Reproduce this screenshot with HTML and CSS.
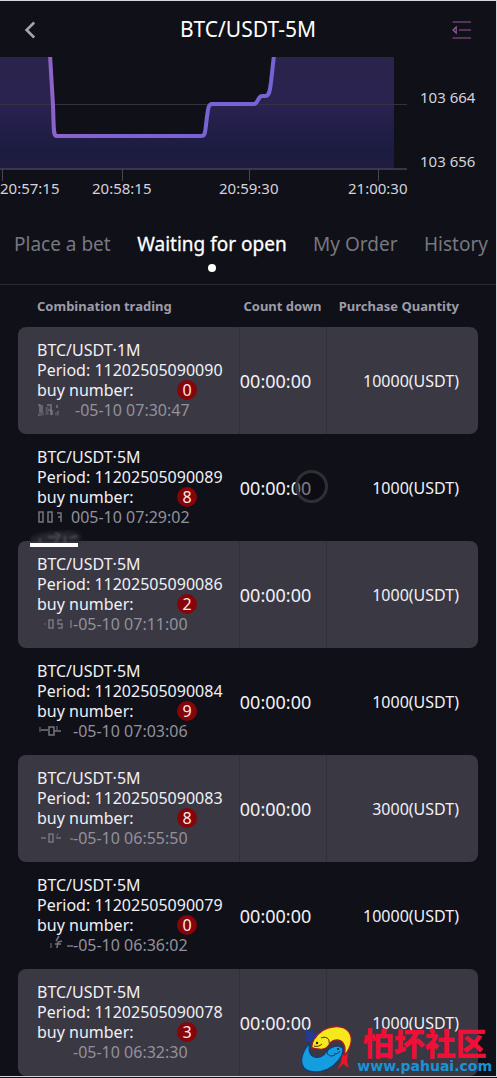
FILE: index.html
```html
<!DOCTYPE html>
<html lang="en">
<head>
<meta charset="utf-8">
<meta name="viewport" content="width=device-width, initial-scale=1">
<title>BTC/USDT-5M</title>
<link rel="stylesheet" href="styles.css">
</head>
<body>
<div class="app">
  <header class="topbar">
    <button class="icon-btn" type="button" aria-label="Back">
      <svg width="12" height="18" viewBox="0 0 12 18" fill="none" stroke="#a3a4b3" stroke-width="2.6"><path d="M10.2 1.500 2.600 9l7.600 7.500"/></svg>
    </button>
    <h1 class="title">BTC/USDT-5M</h1>
    <button class="icon-btn icon-btn-end" type="button" aria-label="Menu">
      <svg width="20" height="18" viewBox="0 0 20 18" fill="none" stroke="#94599a" stroke-width="1.2"><path d="M.5 1h18.500M7 9h12M.5 17h18.500M4.200 6 1 9l3.200 3z"/></svg>
    </button>
  </header>

  <section class="chart">
    <div class="plot">
      <svg class="plot-svg" viewBox="0 0 407 124" preserveAspectRatio="none">
        <defs>
          <linearGradient id="area" x1="0" y1="0" x2="0" y2="1">
            <stop offset="0" stop-color="#2a244b"/><stop offset=".42" stop-color="#2a2250"/>
            <stop offset=".85" stop-color="#1b1b40"/><stop offset="1" stop-color="#201c3f"/>
          </linearGradient>
          <linearGradient id="line" gradientUnits="userSpaceOnUse" x1="50" y1="0" x2="275" y2="0">
            <stop offset="0" stop-color="#8d63c9"/><stop offset=".35" stop-color="#7d62d2"/><stop offset="1" stop-color="#7464d6"/>
          </linearGradient>
        </defs>
        <path fill="url(#area)" d="M0 0H50L53 48C54 74 53 79 57 79H201C205 79 205 76 206 68 208 52 208 47 212 47H254C258 47 258 39 262 39H265C270 39 270 32 271 25L274 0H394V112H0Z"/>
        <path stroke="#34323f" d="M0 47.500H407"/>
        <path stroke="#464356" stroke-width="1.500" d="M0 112H407"/>
        <path stroke="#464550" d="M2.500 112V124M122.500 112V124M249.500 112V124M378.500 112V124"/>
        <path fill="none" stroke="url(#line)" stroke-width="4" stroke-linejoin="round" d="M50 -2 53 48C54 74 53 79 57 79H201C205 79 205 76 206 68 208 52 208 47 212 47H254C258 47 258 39 262 39H265C270 39 270 32 271 25L274 -2"/>
      </svg>
    </div>
    <div class="y-axis"><span>103 664</span><span>103 656</span></div>
    <div class="x-axis"><span>20:57:15</span><span>20:58:15</span><span>20:59:30</span><span>21:00:30</span></div>
  </section>

  <nav class="tabs">
    <button class="tab" type="button">Place a bet</button>
    <button class="tab tab-active" type="button">Waiting for open</button>
    <button class="tab" type="button">My Order</button>
    <button class="tab" type="button">History</button>
  </nav>

  <main class="orders-wrap">
    <table class="orders">
      <colgroup><col class="col-name"><col class="col-time"><col class="col-qty"></colgroup>
      <thead><tr><th>Combination trading</th><th>Count down</th><th>Purchase Quantity</th></tr></thead>
      <tbody>
        <tr>
          <td><div>BTC/USDT·1M</div><div>Period: 11202505090090</div><div class="buy">buy number:<b class="ball">0</b></div>
            <div class="date"><svg class="smudge" width="38" height="20" viewBox="0 0 38 20"><path d="M1 5h2v10H1M5 5v10M10 5h4v10M11 10h4M15 10v5M20 5v3M21 11v3"/><path class="dim" stroke-width="3" d="M2 14h5M10 7v8M18 14h4"/></svg>-05-10 07:30:47</div></td>
          <td>00:00:00</td><td>10000(USDT)</td>
        </tr>
        <tr>
          <td><div>BTC/USDT·5M</div><div>Period: 11202505090089</div><div class="buy">buy number:<b class="ball">8</b></div>
            <div class="date"><svg class="smudge" width="34" height="20" viewBox="0 0 34 20"><path d="M2 5v10h4V5zM11 5v10h4V5zM20 6h4v9M21 10h3"/></svg>005-10 07:29:02</div></td>
          <td>00:00:00<i class="touch"></i></td><td>1000(USDT)</td>
        </tr>
        <tr>
          <td><svg class="streak" width="52" height="18" viewBox="0 0 52 18"><path class="haze" d="M0 12V8L14 3 38 1 50 4v8z"/><path class="scratch" d="M10 8v5M18 7h9M25 3l5 2-5 8M35 6v7M40 8l7-2"/><path fill="#fff" d="M0 13h48v4H0z"/></svg>
            <div>BTC/USDT·5M</div><div>Period: 11202505090086</div><div class="buy">buy number:<b class="ball">2</b></div>
            <div class="date"><svg class="smudge" width="36" height="20" viewBox="0 0 36 20"><path d="M12 6v8h4V6zM25 6h-4v4h4v4h-4M34 6v8"/><path class="dim" d="M7 10h2"/></svg>-05-10 07:11:00</div></td>
          <td>00:00:00</td><td>1000(USDT)</td>
        </tr>
        <tr>
          <td><div>BTC/USDT·5M</div><div>Period: 11202505090084</div><div class="buy">buy number:<b class="ball">9</b></div>
            <div class="date"><svg class="smudge" width="36" height="20" viewBox="0 0 36 20"><path d="M12 6v8h5V6zM4 9h7M17 10h7"/><path class="dim" d="M3 6v5M20 5v4"/></svg>-05-10 07:03:06</div></td>
          <td>00:00:00</td><td>1000(USDT)</td>
        </tr>
        <tr>
          <td><div>BTC/USDT·5M</div><div>Period: 11202505090083</div><div class="buy">buy number:<b class="ball">8</b></div>
            <div class="date"><svg class="smudge" width="36" height="20" viewBox="0 0 36 20"><path d="M4 10h5M12 6v8h4V6zM19 10h5M33 11h4"/><path class="dim" d="M21 5l-2 5"/></svg>-05-10 06:55:50</div></td>
          <td>00:00:00</td><td>3000(USDT)</td>
        </tr>
        <tr>
          <td><div>BTC/USDT·5M</div><div>Period: 11202505090079</div><div class="buy">buy number:<b class="ball">0</b></div>
            <div class="date"><svg class="smudge" width="36" height="20" viewBox="0 0 36 20"><path d="M30 11h7M22 1l-3 5M25 6l-4 1-1 6M18 9h6"/><path class="dim" d="M14 8v5"/></svg>-05-10 06:36:02</div></td>
          <td>00:00:00</td><td>10000(USDT)</td>
        </tr>
        <tr>
          <td><div>BTC/USDT·5M</div><div>Period: 11202505090078</div><div class="buy">buy number:<b class="ball">3</b></div>
            <div class="date"><svg class="smudge" width="36" height="20" viewBox="0 0 36 20"></svg>-05-10 06:32:30</div></td>
          <td>00:00:00</td><td>1000(USDT)</td>
        </tr>
      </tbody>
    </table>
  </main>

  <aside class="mark">
    <svg width="54" height="48" viewBox="0 0 54 48">
      <path fill="#253a94" d="M5 2l4 5 2-5 2 6 5 0-9 8-4-1z"/>
      <path fill="#e8152c" d="M41 29l6-3-1 9 2 7-6-4-6 6 4-8z"/>
      <path fill="#f7e81c" stroke="#a01a2c" stroke-width="1.300" d="M11 22C10 17 14 10 21 5 28 0 40-1 46 4c7 6 5 17-3 26 2-7 1-12-3-15-4-2-8-1-11 2-2 5-7 7-12 6-3 0-4 0-5-1z"/>
      <path fill="#149ee0" stroke="#173b78" stroke-width="1.300" d="M42 23c0 8-7 16-15 20-9 4-20 4-24-1C-2 36 1 25 9 17c-2 8 0 13 5 14 4 1 9-1 11-5 3-4 8-6 12-6 3 1 5 2 5 3z"/>
      <path fill="none" stroke="#3f2c1e" d="M20 12c4-2 9 0 8 5M13 20c3 1 6 0 8-2"/>
      <path fill="none" stroke="#0c3c63" d="M26 25c0 5 4 6 8 4M33 28c3 0 5-1 6-3"/>
      <circle cx="16" cy="17" r="1.200" fill="#222"/><circle cx="37" cy="23" r="1.100" fill="#123"/>
    </svg>
    <div class="mark-text"><strong lang="zh">怕坏社区</strong><span>www.pahuai.com</span></div>
  </aside>
</div>
</body>
</html>
```
FILE: styles.css
```css
* { box-sizing: border-box; }

body {
  margin: 0;
  background: #101018;
  color: #f1f0f6;
  font-family: "Noto Sans", "Open Sans", "Noto Sans CJK SC", sans-serif;
}

button {
  padding: 0;
  border: 0;
  background: none;
  color: inherit;
  font: inherit;
}

.app {
  position: relative;
  overflow: hidden;
  border: 1px solid #d5d6dc;
  border-left: 0;
  background: #101018;
}

.topbar {
  display: grid;
  grid-template-columns: 60px 1fr 60px;
  align-items: center;
  height: 56px;
}

.icon-btn {
  display: flex;
  padding: 6px 24px 4px;
}

.icon-btn-end {
  justify-content: flex-end;
}

.icon-btn svg {
  flex: none;
}

.title {
  margin: 0;
  color: #fff;
  font-size: 21px;
  font-weight: 400;
  line-height: 28px;
  text-align: center;
}

.chart {
  display: grid;
  grid-template-columns: 1fr 89px;
  color: #d4d3dc;
  font-size: 15px;
  line-height: 20px;
}

.plot-svg {
  display: block;
  width: 100%;
  height: 124px;
}

.y-axis {
  display: flex;
  flex-direction: column;
  gap: 44px;
  padding: 30px 0 0 13px;
}

.x-axis {
  display: grid;
  grid-column: 1 / -1;
  grid-template-columns: 92fr 127fr 129fr 148fr;
  height: 24px;
  line-height: 14px;
}

.tabs {
  display: flex;
  justify-content: space-between;
  height: 80px;
  padding: 24px 8px 0 14px;
  border-bottom: 1px solid #292933;
  color: #77777f;
  font-size: 19px;
  line-height: 30px;
}

.tab {
  display: flex;
  flex-direction: column;
  align-items: center;
  white-space: nowrap;
}

.tab-active {
  color: #fff;
  -webkit-text-stroke: 0.3px #fff;
}

.tab-active::after {
  width: 8px;
  height: 8px;
  margin-top: 5px;
  border-radius: 50%;
  background: #fff;
  content: "";
}

.orders-wrap {
  padding: 0 18px;
}

.orders {
  width: 100%;
  border-spacing: 0;
  table-layout: fixed;
}

.col-name { width: 48%; }
.col-time { width: 19%; }
.col-qty { width: 33%; }

.orders th {
  height: 42px;
  padding: 0;
  color: #9d9ca8;
  font-size: 13px;
  font-weight: 700;
  white-space: nowrap;
}

.orders th:first-child {
  padding-left: 19px;
  text-align: left;
}

.orders th:last-child {
  padding-right: 19px;
  text-align: right;
}

.orders td {
  position: relative;
  height: 107px;
  padding: 0;
  font-size: 16px;
  line-height: 20px;
  white-space: nowrap;
}

.orders td:first-child {
  padding: 0 0 2px 19px;
}

.orders td:nth-child(2) {
  font-size: 18px;
  text-align: left;
}

.orders td:last-child {
  padding-right: 19px;
  text-align: right;
}

.orders tr:nth-child(odd) td {
  background: #3a3843;
}

.orders tbody td + td {
  border-left: 1px solid transparent;
}

.orders tbody tr:nth-child(odd) td + td {
  border-left-color: #32303c;
}

.orders td:first-child { border-radius: 8px 0 0 8px; }
.orders td:last-child { border-radius: 0 8px 8px 0; }

.buy {
  display: flex;
  justify-content: space-between;
  width: 160px;
}

.ball {
  width: 20px;
  height: 20px;
  border-radius: 50%;
  background: #850508;
  color: #ffe9ea;
  font-weight: 400;
  text-align: center;
}

.date {
  display: flex;
  color: #92919c;
}

.smudge {
  flex: none;
  fill: none;
  stroke: #77767f;
  stroke-width: 1.5;
  filter: blur(0.6px);
}

.smudge .dim {
  stroke: #56555f;
}

.streak {
  position: absolute;
  top: -11px;
  left: 12px;
  fill: none;
}

.haze {
  fill: #292931;
  filter: blur(2px);
}

.scratch {
  stroke: #707078;
  filter: blur(1px);
}

.touch {
  position: absolute;
  top: 36px;
  right: -2px;
  width: 33px;
  height: 33px;
  border: 3px solid #2f2f36;
  border-radius: 50%;
  background: rgba(8, 8, 12, 0.5);
}

.mark {
  position: absolute;
  right: 4px;
  bottom: 2px;
  display: flex;
  gap: 2px;
  align-items: center;
}

.mark-text {
  display: flex;
  flex-direction: column;
  color: #1a93d6;
  font: 700 14px/16px "DejaVu Sans", sans-serif;
  text-align: center;
}

.mark-text strong {
  color: #f00f36;
  font: 900 31px/32px "Noto Sans CJK SC", sans-serif;
}
```
